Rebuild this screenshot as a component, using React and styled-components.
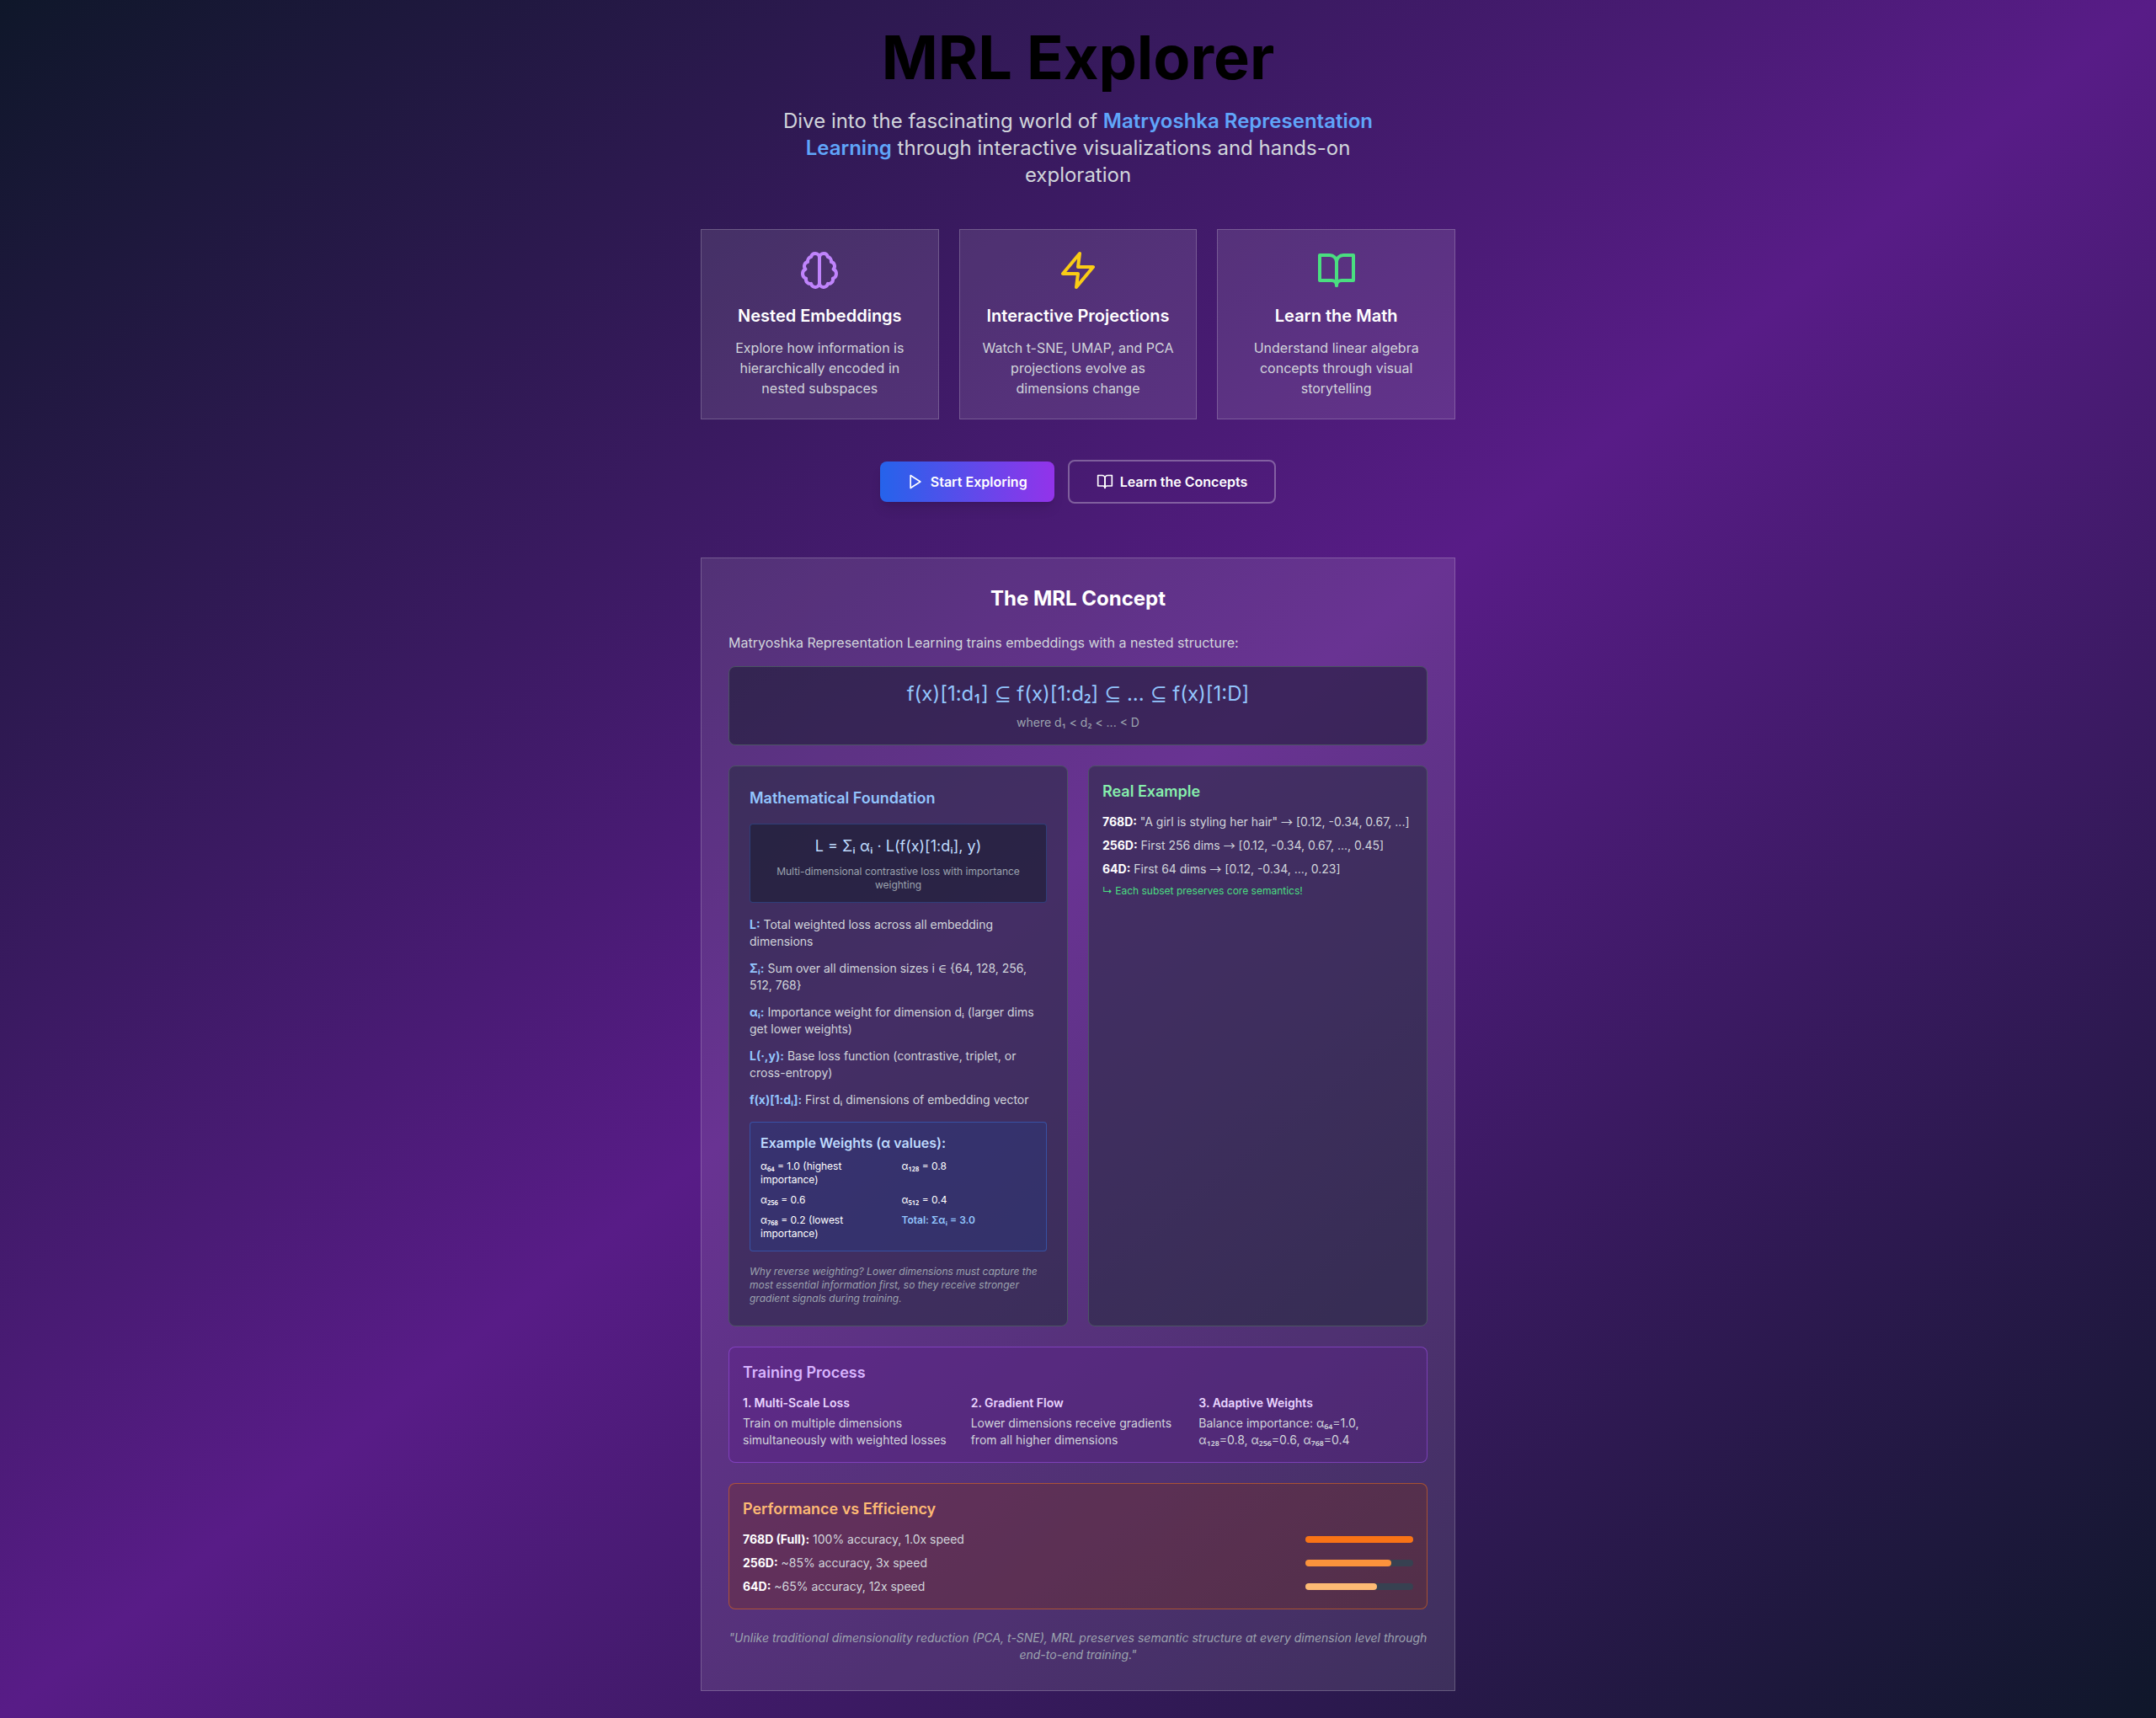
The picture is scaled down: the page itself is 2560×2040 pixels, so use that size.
import styled, { createGlobalStyle } from "styled-components";

const GlobalStyle = createGlobalStyle`
  *, *::before, *::after {
    box-sizing: border-box;
  }

  body {
    margin: 0;
    font-family: Inter, "Noto Sans", sans-serif;
    font-size: 16px;
    line-height: 24px;
    color: #ffffff;
  }

  h1, h2, h3, h4, p, ul {
    margin: 0;
    padding: 0;
  }

  ul {
    list-style: none;
  }
`;

const Page = styled.div`
  min-height: 100vh;
  padding: 32px 16px;
  background: linear-gradient(to bottom right, #0f172a, #581c87, #0f172a);
`;

const Container = styled.main`
  max-width: 896px;
  margin: 0 auto;
`;

const Hero = styled.header`
  text-align: center;
  margin-bottom: 48px;
`;

const Title = styled.h1`
  margin-bottom: 24px;
  font-size: 72px;
  line-height: 72px;
  font-weight: 700;
  color: #000000;
`;

const Subtitle = styled.p`
  max-width: 768px;
  margin: 0 auto;
  font-size: 24px;
  line-height: 32px;
  color: #d1d5db;
`;

const Highlight = styled.span`
  font-weight: 600;
  color: #60a5fa;
`;

const Features = styled.section`
  display: grid;
  grid-template-columns: repeat(3, 1fr);
  gap: 24px;
  margin-bottom: 48px;
`;

const GlassCard = styled.div`
  background: rgba(255, 255, 255, 0.1);
  border: 1px solid rgba(255, 255, 255, 0.2);
`;

const FeatureCard = styled(GlassCard)`
  padding: 24px;
  text-align: center;

  svg {
    display: block;
    width: 48px;
    height: 48px;
    margin: 0 auto 16px;
    color: ${(props) => props.$accent};
  }
`;

const FeatureTitle = styled.h3`
  margin-bottom: 12px;
  font-size: 20px;
  line-height: 28px;
  font-weight: 600;
`;

const Text = styled.p`
  color: #d1d5db;
`;

const Actions = styled.div`
  display: flex;
  justify-content: center;
  align-items: center;
  gap: 16px;
  margin-bottom: 64px;
`;

const Button = styled.button`
  display: inline-flex;
  align-items: center;
  gap: 8px;
  padding: 12px 32px;
  border: 0;
  border-radius: 8px;
  font-family: inherit;
  font-size: 16px;
  line-height: 24px;
  font-weight: 600;
  color: #ffffff;
  cursor: pointer;

  svg {
    width: 20px;
    height: 20px;
  }
`;

const PrimaryButton = styled(Button)`
  background: linear-gradient(to right, #2563eb, #9333ea);
  box-shadow:
    0 10px 15px -3px rgba(0, 0, 0, 0.1),
    0 4px 6px -4px rgba(0, 0, 0, 0.1);

  &:hover {
    background: linear-gradient(to right, #1d4ed8, #7e22ce);
  }
`;

const OutlineButton = styled(Button)`
  background: transparent;
  border: 2px solid rgba(255, 255, 255, 0.3);

  &:hover {
    background: rgba(255, 255, 255, 0.1);
  }
`;

const Concept = styled(GlassCard)`
  display: flex;
  flex-direction: column;
  gap: 24px;
  padding: 32px;
`;

const ConceptTitle = styled.h2`
  font-size: 24px;
  line-height: 32px;
  font-weight: 700;
  text-align: center;
`;

const Intro = styled.div`
  display: flex;
  flex-direction: column;
  gap: 16px;
`;

const Panel = styled.section`
  padding: ${(props) => (props.$roomy ? "24px" : "16px")};
  background: rgba(31, 41, 55, 0.5);
  border: 1px solid #4b5563;
  border-radius: 8px;
`;

const FormulaPanel = styled(Panel)`
  background: rgba(17, 24, 39, 0.5);
  text-align: center;
`;

const TrainingPanel = styled(Panel)`
  background: rgba(88, 28, 135, 0.3);
  border-color: rgba(168, 85, 247, 0.5);
`;

const PerformancePanel = styled(Panel)`
  background: rgba(124, 45, 18, 0.3);
  border-color: rgba(249, 115, 22, 0.5);
`;

const PanelTitle = styled.h3`
  margin-bottom: ${(props) => (props.$roomy ? "16px" : "12px")};
  font-size: 18px;
  line-height: 28px;
  font-weight: 600;
  color: ${(props) => props.$color};
`;

const Formula = styled.div`
  margin-bottom: 8px;
  font-size: 24px;
  line-height: 32px;
  color: #93c5fd;
`;

const FormulaNote = styled.p`
  font-size: 14px;
  line-height: 20px;
  color: #9ca3af;
`;

const Columns = styled.div`
  display: grid;
  grid-template-columns: 1fr 1fr;
  gap: 24px;
`;

const LossBox = styled.div`
  margin-bottom: 16px;
  padding: 12px;
  background: rgba(17, 24, 39, 0.5);
  border: 1px solid rgba(59, 130, 246, 0.3);
  border-radius: 4px;
  text-align: center;
`;

const LossFormula = styled.div`
  margin-bottom: 8px;
  font-size: 18px;
  line-height: 28px;
  color: #bfdbfe;
`;

const SmallNote = styled.p`
  font-size: 12px;
  line-height: 16px;
  color: #9ca3af;
  font-style: ${(props) => (props.$italic ? "italic" : "normal")};
`;

const List = styled.ul`
  display: flex;
  flex-direction: column;
  gap: ${(props) => (props.$loose ? "12px" : "8px")};
  font-size: 14px;
  line-height: 20px;
  color: #d1d5db;

  strong {
    font-weight: 700;
    color: ${(props) => props.$labelColor || "#ffffff"};
  }
`;

const WeightsBox = styled.div`
  margin: 16px 0;
  padding: 12px;
  background: rgba(30, 58, 138, 0.3);
  border: 1px solid rgba(59, 130, 246, 0.4);
  border-radius: 4px;
`;

const WeightsTitle = styled.h4`
  margin-bottom: 8px;
  font-size: 16px;
  line-height: 24px;
  font-weight: 600;
  color: #bfdbfe;
`;

const WeightsGrid = styled.div`
  display: grid;
  grid-template-columns: 1fr 1fr;
  gap: 8px;
  font-size: 12px;
  line-height: 16px;
`;

const Total = styled.div`
  font-weight: 600;
  color: #93c5fd;
`;

const Remark = styled.li`
  font-size: 12px;
  line-height: 16px;
  color: #4ade80;
`;

const Steps = styled.div`
  display: grid;
  grid-template-columns: repeat(3, 1fr);
  gap: 16px;
  font-size: 14px;
  line-height: 20px;
`;

const StepTitle = styled.h4`
  margin-bottom: 4px;
  font-size: 14px;
  line-height: 20px;
  font-weight: 600;
  color: #e9d5ff;
`;

const StepText = styled(Text)`
  white-space: pre-line;
`;

const PerformanceRow = styled.li`
  display: flex;
  align-items: center;
  justify-content: space-between;
`;

const Track = styled.div`
  width: 128px;
  height: 8px;
  background: #374151;
  border-radius: 4px;
`;

const Fill = styled.div`
  height: 8px;
  background: ${(props) => props.$color};
  border-radius: 4px;
`;

const Quote = styled.p`
  font-size: 14px;
  line-height: 20px;
  font-style: italic;
  text-align: center;
  color: #9ca3af;
`;

// subscript digits, set signs and arrows each come from their own font
const Digits = styled.span`
  font-family: "Noto Sans", sans-serif;
  font-weight: 500;
  line-height: 1;
`;

const Sign = styled.span`
  font-family: "DejaVu Serif", serif;
  line-height: 1;
`;

const Arrow = styled.span`
  font-family: "Noto Sans CJK SC", sans-serif;
  line-height: 1;
`;

function MathText({ children }) {
  return children.split(/([₀-₉]+|[⊆∈→])/).map((part, index) => {
    if (index % 2 === 0) return part;
    if (part === "→") return <Arrow key={index}>{part}</Arrow>;
    if (part === "⊆" || part === "∈") return <Sign key={index}>{part}</Sign>;
    return <Digits key={index}>{part}</Digits>;
  });
}

function Icon({ children }) {
  return (
    <svg
      viewBox="0 0 24 24"
      fill="none"
      stroke="currentColor"
      strokeWidth="2"
      strokeLinecap="round"
      strokeLinejoin="round"
      aria-hidden="true"
    >
      {children}
    </svg>
  );
}

function BrainIcon() {
  return (
    <Icon>
      <path d="M9.5 2A2.5 2.5 0 0 1 12 4.5v15a2.5 2.5 0 0 1-4.96.44 2.5 2.5 0 0 1-2.96-3.08 3 3 0 0 1-.34-5.58 2.5 2.5 0 0 1 1.32-4.24 2.5 2.5 0 0 1 1.98-3A2.5 2.5 0 0 1 9.5 2Z" />
      <path d="M14.5 2A2.5 2.5 0 0 0 12 4.5v15a2.5 2.5 0 0 0 4.96.44 2.5 2.5 0 0 0 2.96-3.08 3 3 0 0 0 .34-5.58 2.5 2.5 0 0 0-1.32-4.24 2.5 2.5 0 0 0-1.98-3A2.5 2.5 0 0 0 14.5 2Z" />
    </Icon>
  );
}

function ZapIcon() {
  return (
    <Icon>
      <polygon points="13 2 3 14 12 14 11 22 21 10 12 10 13 2" />
    </Icon>
  );
}

function BookIcon() {
  return (
    <Icon>
      <path d="M2 3h6a4 4 0 0 1 4 4v14a3 3 0 0 0-3-3H2z" />
      <path d="M22 3h-6a4 4 0 0 0-4 4v14a3 3 0 0 1 3-3h7z" />
    </Icon>
  );
}

function PlayIcon() {
  return (
    <Icon>
      <polygon points="5 3 19 12 5 21 5 3" />
    </Icon>
  );
}

const features = [
  {
    icon: <BrainIcon />,
    accent: "#c084fc",
    title: "Nested Embeddings",
    text: "Explore how information is hierarchically encoded in nested subspaces",
  },
  {
    icon: <ZapIcon />,
    accent: "#facc15",
    title: "Interactive Projections",
    text: "Watch t-SNE, UMAP, and PCA projections evolve as dimensions change",
  },
  {
    icon: <BookIcon />,
    accent: "#4ade80",
    title: "Learn the Math",
    text: "Understand linear algebra concepts through visual storytelling",
  },
];

const terms = [
  ["L:", "Total weighted loss across all embedding dimensions"],
  ["Σᵢ:", "Sum over all dimension sizes i ∈ {64, 128, 256, 512, 768}"],
  ["αᵢ:", "Importance weight for dimension dᵢ (larger dims get lower weights)"],
  ["L(·,y):", "Base loss function (contrastive, triplet, or cross-entropy)"],
  ["f(x)[1:dᵢ]:", "First dᵢ dimensions of embedding vector"],
];

const weights = [
  "α₆₄ = 1.0 (highest importance)",
  "α₁₂₈ = 0.8",
  "α₂₅₆ = 0.6",
  "α₅₁₂ = 0.4",
  "α₇₆₈ = 0.2 (lowest importance)",
];

const examples = [
  ["768D:", '"A girl is styling her hair" → [0.12, -0.34, 0.67, ...]'],
  ["256D:", "First 256 dims → [0.12, -0.34, 0.67, ..., 0.45]"],
  ["64D:", "First 64 dims → [0.12, -0.34, ..., 0.23]"],
];

const steps = [
  [
    "1. Multi-Scale Loss",
    "Train on multiple dimensions simultaneously with weighted losses",
  ],
  [
    "2. Gradient Flow",
    "Lower dimensions receive gradients from all higher dimensions",
  ],
  [
    "3. Adaptive Weights",
    "Balance importance: α₆₄=1.0,\nα₁₂₈=0.8, α₂₅₆=0.6, α₇₆₈=0.4",
  ],
];

const performance = [
  {
    label: "768D (Full):",
    text: "100% accuracy, 1.0x speed",
    width: "100%",
    color: "#f97316",
  },
  {
    label: "256D:",
    text: "~85% accuracy, 3x speed",
    width: "80%",
    color: "#fb923c",
  },
  {
    label: "64D:",
    text: "~65% accuracy, 12x speed",
    width: "calc(100% * 2 / 3)",
    color: "#fdba74",
  },
];

export default function App() {
  return (
    <Page>
      <GlobalStyle />
      <Container>
        <Hero>
          <Title>MRL Explorer</Title>
          <Subtitle>
            Dive into the fascinating world of{" "}
            <Highlight>Matryoshka Representation Learning</Highlight> through
            interactive visualizations and hands-on exploration
          </Subtitle>
        </Hero>

        <Features>
          {features.map((feature) => (
            <FeatureCard key={feature.title} $accent={feature.accent}>
              {feature.icon}
              <FeatureTitle>{feature.title}</FeatureTitle>
              <Text>{feature.text}</Text>
            </FeatureCard>
          ))}
        </Features>

        <Actions>
          <PrimaryButton type="button">
            <PlayIcon />
            Start Exploring
          </PrimaryButton>
          <OutlineButton type="button">
            <BookIcon />
            Learn the Concepts
          </OutlineButton>
        </Actions>

        <Concept>
          <ConceptTitle>The MRL Concept</ConceptTitle>

          <Intro>
            <Text>
              Matryoshka Representation Learning trains embeddings with a nested
              structure:
            </Text>
            <FormulaPanel>
              <Formula>
                <MathText>f(x)[1:d₁] ⊆ f(x)[1:d₂] ⊆ ... ⊆ f(x)[1:D]</MathText>
              </Formula>
              <FormulaNote>
                <MathText>{"where d₁ < d₂ < ... < D"}</MathText>
              </FormulaNote>
            </FormulaPanel>
          </Intro>

          <Columns>
            <Panel $roomy>
              <PanelTitle $roomy $color="#93c5fd">
                Mathematical Foundation
              </PanelTitle>
              <LossBox>
                <LossFormula>L = Σᵢ αᵢ · L(f(x)[1:dᵢ], y)</LossFormula>
                <SmallNote>
                  Multi-dimensional contrastive loss with importance weighting
                </SmallNote>
              </LossBox>
              <List $loose $labelColor="#93c5fd">
                {terms.map(([label, text]) => (
                  <li key={label}>
                    <strong>{label}</strong> <MathText>{text}</MathText>
                  </li>
                ))}
              </List>
              <WeightsBox>
                <WeightsTitle>Example Weights (α values):</WeightsTitle>
                <WeightsGrid>
                  {weights.map((weight) => (
                    <div key={weight}>
                      <MathText>{weight}</MathText>
                    </div>
                  ))}
                  <Total>Total: Σαᵢ = 3.0</Total>
                </WeightsGrid>
              </WeightsBox>
              <SmallNote $italic>
                Why reverse weighting? Lower dimensions must capture the most
                essential information first, so they receive stronger gradient
                signals during training.
              </SmallNote>
            </Panel>

            <Panel>
              <PanelTitle $color="#86efac">Real Example</PanelTitle>
              <List>
                {examples.map(([label, text]) => (
                  <li key={label}>
                    <strong>{label}</strong> <MathText>{text}</MathText>
                  </li>
                ))}
                <Remark>↳ Each subset preserves core semantics!</Remark>
              </List>
            </Panel>
          </Columns>

          <TrainingPanel>
            <PanelTitle $color="#d8b4fe">Training Process</PanelTitle>
            <Steps>
              {steps.map(([title, text]) => (
                <div key={title}>
                  <StepTitle>{title}</StepTitle>
                  <StepText>
                    <MathText>{text}</MathText>
                  </StepText>
                </div>
              ))}
            </Steps>
          </TrainingPanel>

          <PerformancePanel>
            <PanelTitle $color="#fdba74">Performance vs Efficiency</PanelTitle>
            <List>
              {performance.map((row) => (
                <PerformanceRow key={row.label}>
                  <span>
                    <strong>{row.label}</strong> {row.text}
                  </span>
                  <Track>
                    <Fill $color={row.color} style={{ width: row.width }} />
                  </Track>
                </PerformanceRow>
              ))}
            </List>
          </PerformancePanel>

          <Quote>
            "Unlike traditional dimensionality reduction (PCA, t-SNE), MRL
            preserves semantic structure at every dimension level through
            end-to-end training."
          </Quote>
        </Concept>
      </Container>
    </Page>
  );
}
